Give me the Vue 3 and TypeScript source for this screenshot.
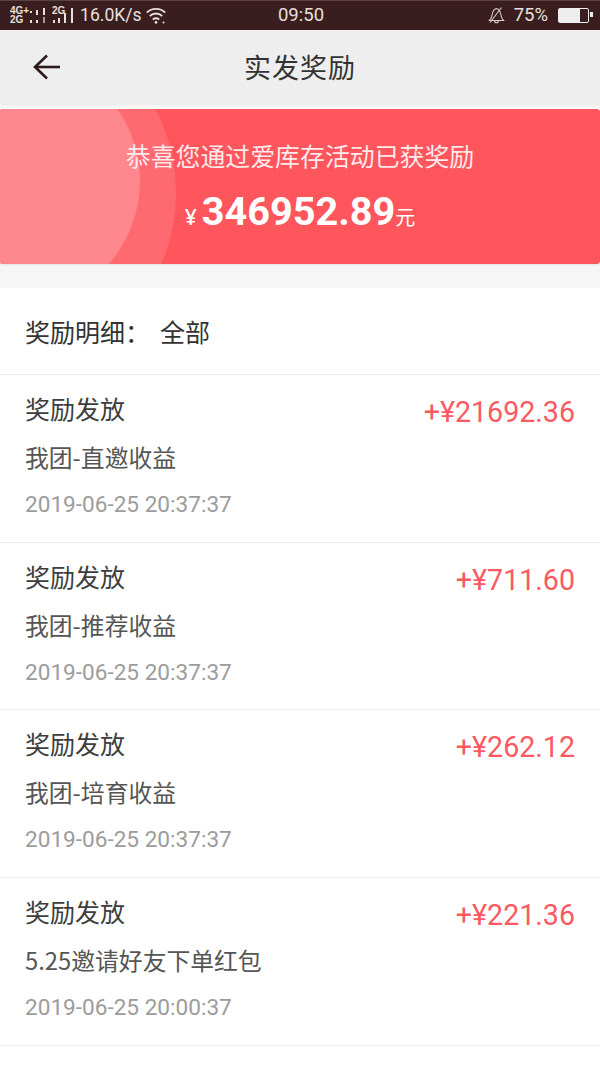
<template>
  <div class="page">
    <!-- status bar -->
    <div class="status">
      <div class="status-left">
        <svg class="signals" width="68" height="30" viewBox="10 0 68 30" aria-hidden="true">
          <g class="net-labels">
            <text x="10" y="14">4G+</text>
            <text x="10" y="23">2G</text>
            <text x="52" y="14">2G</text>
          </g>
          <g fill="#e8e0dc">
            <rect x="30" y="11" width="2" height="2" />
            <rect x="30" y="20" width="2" height="3" />
            <rect x="36" y="10" width="2" height="5" />
            <rect x="36" y="20" width="2" height="3" />
            <rect x="43" y="8" width="2" height="7" />
            <rect x="43" y="17" width="2" height="6" fill="#a8999a" />
            <rect x="53" y="20" width="2" height="3" />
            <rect x="58" y="18" width="2" height="5" />
            <rect x="64" y="13" width="2" height="10" />
            <rect x="71" y="8" width="2" height="15" />
          </g>
        </svg>
        <span class="speed">16.0K/s</span>
        <svg class="wifi" width="20" height="17" viewBox="0 0 20 17" fill="none" stroke="#e8e0dc" stroke-width="1.9" aria-hidden="true">
          <path d="M0.8 5.6C5.8 0.6 14.2 0.6 19.2 5.6" />
          <path d="M3.8 9C7.4 5.7 12.6 5.7 16.2 9" />
          <path d="M6.8 12.4C8.6 11 11.4 11 13.2 12.4" />
          <circle cx="10" cy="15.4" r="1.3" fill="#e8e0dc" stroke="none" />
          <circle cx="17.5" cy="15.6" r="1" fill="#e8e0dc" stroke="none" />
        </svg>
      </div>
      <span class="clock">09:50</span>
      <div class="status-right">
        <svg class="bell" width="17" height="18" viewBox="0 0 17 18" fill="none" stroke="#d8cec9" stroke-width="1.1" aria-hidden="true">
          <path d="M1.5 14.5h14c-1.6-1.6-2.2-3-2.5-5.2-.4-3-1-6-4.5-6.8-3.5.8-4.1 3.8-4.5 6.8-.3 2.2-.9 3.6-2.5 5.2z" />
          <path d="M6.5 14.8a2 2 0 0 0 4 0" />
          <path d="M13.5 1.5L2 16.5" />
        </svg>
        <span class="pct">75%</span>
        <div class="battery"><i class="battery-fill"></i></div>
      </div>
    </div>

    <!-- header -->
    <header class="nav">
      <svg class="back" width="30" height="28" viewBox="0 0 30 28" fill="none" stroke="#2e1a1a" stroke-width="2.6" aria-hidden="true">
        <path d="M15 2.5L3 14l12 11.5" />
        <path d="M3 14h25" />
      </svg>
      <h1>实发奖励</h1>
    </header>

    <!-- reward banner -->
    <section class="banner">
      <div class="ring outer"></div>
      <div class="ring inner"></div>
      <p class="congrats">恭喜您通过爱库存活动已获奖励</p>
      <p class="total">
        <span class="yen">¥</span><b>346952.89</b><span class="unit">元</span>
      </p>
    </section>

    <div class="filter">奖励明细：<span class="filter-value">全部</span></div>

    <ul class="list">
      <li v-for="item in rows" :key="item.desc" class="row">
        <div class="row-left">
          <div class="row-title">奖励发放</div>
          <div class="row-desc">{{ item.desc }}</div>
          <div class="row-time">{{ item.time }}</div>
        </div>
        <div class="row-amount">{{ item.amount }}</div>
      </li>
    </ul>
  </div>
</template>

<script setup lang="ts">
interface RewardRow {
  desc: string
  time: string
  amount: string
}

const rows: RewardRow[] = [
  { desc: '我团-直邀收益', time: '2019-06-25 20:37:37', amount: '+¥21692.36' },
  { desc: '我团-推荐收益', time: '2019-06-25 20:37:37', amount: '+¥711.60' },
  { desc: '我团-培育收益', time: '2019-06-25 20:37:37', amount: '+¥262.12' },
  { desc: '5.25邀请好友下单红包', time: '2019-06-25 20:00:37', amount: '+¥221.36' },
]
</script>

<style>
html,
body {
  margin: 0;
  background: #fff;
}
</style>

<style scoped>
.page {
  width: 600px;
  height: 1066px;
  overflow: hidden;
  background: #fff;
  font-family: "Noto Sans CJK SC", "Noto Sans", sans-serif;
}

.status {
  height: 30px;
  box-sizing: border-box;
  display: grid;
  grid-template-columns: 1fr auto 1fr;
  align-items: center;
  padding: 0 8px 0 10px;
  background: #3a1d1e;
  color: #e8e0dc;
  box-shadow: inset 0 1px 0 #5a4142;
}
.status-left {
  display: flex;
  align-items: center;
}
.signals {
  flex: none;
}
.net-labels {
  fill: #e8e0dc;
  font: 700 10px "Liberation Sans", sans-serif;
}
.speed {
  margin-left: 2px;
  font: 17.6px "Roboto", sans-serif;
}
.wifi {
  margin-left: 4px;
}
.clock {
  font: 18.5px "Roboto", sans-serif;
}
.status-right {
  display: flex;
  align-items: center;
  justify-content: flex-end;
}
.bell {
  margin-right: 1px;
}
.pct {
  margin-left: 8px;
  font: 18.5px "Roboto", sans-serif;
}
.battery {
  position: relative;
  margin-left: 10px;
  margin-right: 3px;
  width: 31px;
  height: 15px;
  box-sizing: border-box;
  border: 1.5px solid #eee;
  border-radius: 2px;
}
.battery::after {
  content: "";
  position: absolute;
  right: -4.5px;
  top: 3.5px;
  width: 2.5px;
  height: 5px;
  background: #eee;
}
.battery-fill {
  display: block;
  width: 21px;
  height: 100%;
  background: #eee;
}

.nav {
  height: 75px;
  display: flex;
  align-items: center;
  justify-content: center;
  position: relative;
  background: #eeeeee;
  border-bottom: 3px solid #f5f5f5;
}
.back {
  position: absolute;
  left: 32px;
  top: 23px;
}
.nav h1 {
  margin: 0 0 2px;
  font-size: 27px;
  font-weight: 400;
  color: #333;
  letter-spacing: 1px;
}

.banner {
  position: relative;
  height: 155px;
  margin-top: 1px;
  overflow: hidden;
  background: #ff555d;
  color: #fff;
  text-align: center;
  border-radius: 3px;
  box-shadow: 0 1px 2px rgba(0, 0, 0, 0.08);
}
.ring {
  position: absolute;
  border-radius: 50%;
}
.ring.outer {
  width: 360px;
  height: 360px;
  left: -184px;
  top: -96px;
  background: #ff6a71;
}
.ring.inner {
  width: 252px;
  height: 252px;
  left: -112px;
  top: -54px;
  background: #ff878d;
}
.congrats {
  position: relative;
  margin: 0;
  padding-top: 29px;
  font-size: 24.9px;
  line-height: 34px;
  color: #ffe9ea;
}
.total {
  position: relative;
  margin: 16px 0 0;
  line-height: 46px;
}
.yen {
  font: 500 21px "Noto Sans", sans-serif;
  margin-right: 5px;
}
.total b {
  font: 700 39.7px "Roboto", sans-serif;
}
.unit {
  font-size: 20px;
}

/* grey gap under the banner */
.filter {
  height: 87px;
  box-sizing: border-box;
  padding-left: 25px;
  line-height: 86px;
  font-size: 25px;
  color: #333;
  background: #fff;
  border-bottom: 1px solid #eee;
}
.banner + .filter {
  margin-top: 24px;
  box-shadow: 0 -24px 0 #f6f6f6;
}
.filter-value {
  margin-left: 10px;
}

.list {
  margin: 0;
  padding: 0;
  list-style: none;
}
.row {
  height: 167.7px;
  box-sizing: border-box;
  display: flex;
  justify-content: space-between;
  padding: 15px 25px 0;
  border-bottom: 1px solid #eee;
}
.row-title {
  font-size: 25px;
  line-height: 36px;
  color: #3d3d3d;
}
.row-desc {
  margin-top: 14px;
  font-size: 23.8px;
  line-height: 34px;
  color: #555;
}
.row-time {
  margin-top: 14px;
  font: 22.6px/34px "Roboto", sans-serif;
  color: #9c9c9c;
}
.row-amount {
  margin-top: 2px;
  font: 28.6px/40px "Roboto", sans-serif;
  color: #fb5a63;
}
</style>
